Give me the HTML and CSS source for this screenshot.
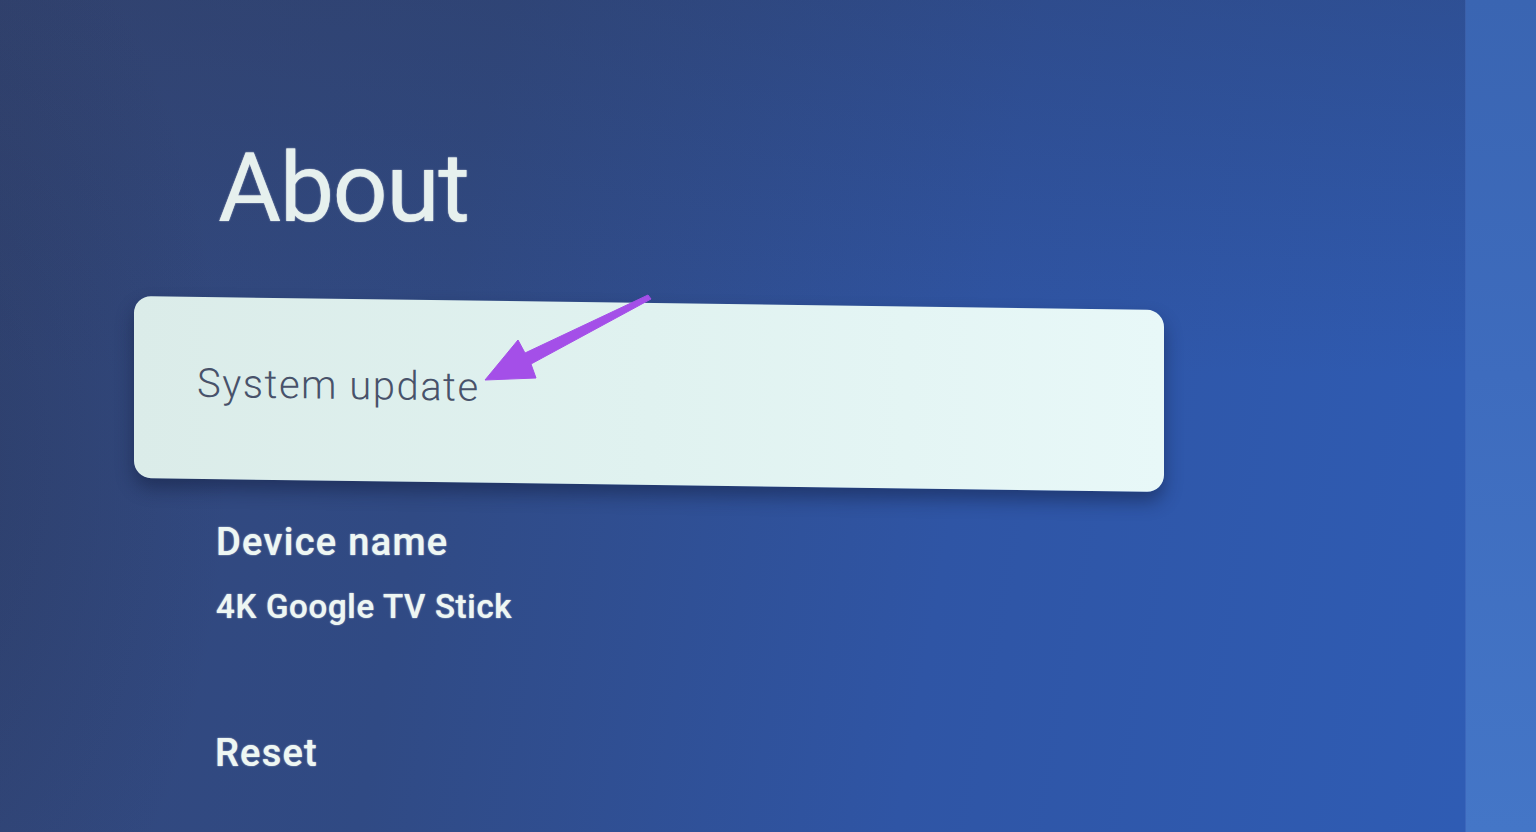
FILE: index.html
```html
<!DOCTYPE html>
<html lang="en">
<head>
<meta charset="utf-8">
<title>About</title>
<link rel="stylesheet" href="styles.css">
</head>
<body>
<div class="screen">
  <main class="main">
    <h1 class="title">About</h1>
    <div class="card">
      <span class="card-label">System update</span>
    </div>
    <div class="item">
      <div class="item-title">Device name</div>
      <div class="item-sub">4K Google TV Stick</div>
    </div>
    <div class="item reset">
      <div class="item-title big">Reset</div>
    </div>
  </main>
  <aside class="side"></aside>
  <svg class="arrow" width="1536" height="832" viewBox="0 0 1536 832">
    <polygon points="485,380 518,340 525,353 648,295 651,299 531,364 536,378" fill="#a44fe8" stroke="#a44fe8" stroke-width="1" stroke-linejoin="round"/>
  </svg>
</div>
</body>
</html>
```

FILE: styles.css
```css
html, body {
  margin: 0;
  padding: 0;
}
body {
  width: 1536px;
  height: 832px;
  overflow: hidden;
  font-family: Roboto, "Noto Sans", sans-serif;
}
.screen {
  position: relative;
  display: flex;
  width: 1536px;
  height: 832px;
  background:
    radial-gradient(ellipse 500px 900px at -120px 450px, rgba(30,38,60,0.3), rgba(30,38,60,0) 70%),
    linear-gradient(180deg, rgba(45,55,85,0.3) 0%, rgba(45,55,85,0) 45%),
    linear-gradient(100deg, #33477a 0%, #304a84 30%, #2f55a5 62%, #2f5db6 100%);
}
.main {
  flex: 1;
  padding-left: 134px;
  display: flex;
  flex-direction: column;
}
.side {
  width: 70px;
  background: linear-gradient(180deg, #3a65b2 0%, #3e6cbe 45%, #4476c7 100%);
  box-shadow: -1px 0 0 rgba(80,120,200,0.4);
}
.title {
  margin: 139px 0 0 84px;
  font-size: 97px;
  line-height: 98px;
  font-weight: 400;
  color: #e6f0ee;
  letter-spacing: -1.6px;
  text-shadow: 0 0 2px rgba(255,255,255,0.4), 0 0 1px rgba(255,255,255,0.6);
}
.card {
  margin-top: 59px;
  width: 1030px;
  height: 182px;
  box-sizing: border-box;
  border-radius: 17px;
  background: linear-gradient(90deg, #dbece9 0%, #e0f2f0 50%, #e8f8f8 100%);
  transform: skewY(0.78deg);
  transform-origin: left center;
  box-shadow: 0 10px 18px rgba(15,25,55,0.45);
  padding: 63px 0 0 63px;
}
.card-label {
  display: block;
  font-size: 40px;
  line-height: 48px;
  font-weight: 300;
  color: #48526a;
  letter-spacing: 1.5px;
}
.item {
  margin-left: 82px;
  color: #eef7f3;
  text-shadow: 0 0 2px rgba(255,255,255,0.45), 0 0 1px rgba(255,255,255,0.6);
}
.card + .item {
  margin-top: 43px;
}
.item-title {
  font-size: 38px;
  line-height: 42px;
  font-weight: 500;
  letter-spacing: 1.3px;
}
.item-sub {
  margin-top: 26px;
  font-size: 33px;
  line-height: 36px;
  font-weight: 500;
  letter-spacing: 0.7px;
}
.reset {
  margin-top: 107px;
  margin-left: 81px;
}
.item-title.big {
  font-size: 38px;
  letter-spacing: 1.2px;
}
.arrow {
  position: absolute;
  left: 0;
  top: 0;
  pointer-events: none;
}
```
